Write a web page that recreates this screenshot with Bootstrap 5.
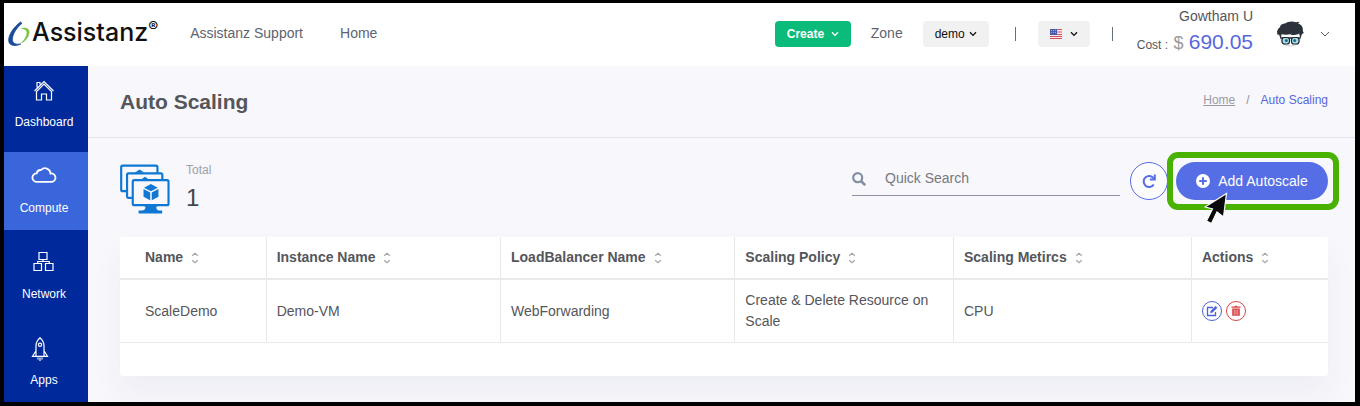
<!DOCTYPE html>
<html lang="en">
<head>
<meta charset="utf-8">
<meta name="viewport" content="width=device-width, initial-scale=1">
<title>Auto Scaling - Assistanz</title>
<link href="https://cdn.jsdelivr.net/npm/bootstrap@5.3.0/dist/css/bootstrap.min.css" rel="stylesheet">
<style>
  :root { --ink: #54565b; --accent: #556ee6; --line: #e9e9ec; --page: #f7f7fc; }
  body { font-family: "Liberation Sans", Arial, sans-serif; font-size: 14px; line-height: 21px; color: var(--ink); background: var(--page); }
  svg { display: block; }
  .app-frame { min-height: 100vh; border: solid #000; border-width: 3px 5px 4px 4px; }
  .topbar { height: 63px; background: #fff; padding-bottom: 2px; }
  .topbar .plain-link { color: #5d6470; text-decoration: none; }
  .main-links { gap: 37px; padding-left: 32px; }
  .brand { color: #111; text-decoration: none; font-family: Inter, "Open Sans", sans-serif; font-size: 25px; line-height: 32px; font-weight: 500; padding-bottom: 3px; }
  .brand svg { margin-top: 3px; }
  .brand sup { font-size: 15px; line-height: 1; top: -9px; font-weight: 600; }
  .top-btn { height: 26px; border: 0; border-radius: 4px; font-size: 12px; line-height: 18px; padding: 0 12px; background: #f1f1f1; color: #111; }
  .create-btn { background: #0abb7a; color: #fff; font-weight: 700; width: 76px; }
  .bar-mark { width: 1px; height: 14px; background: #66707a; margin-left: 22px; }
  .bar-mark.first-mark { margin: 0 22px 0 26px; }
  .user-name { line-height: 24px; }
  .cost-line { font-size: 12px; line-height: 28px; }
  .cost-sign { font-size: 18px; color: #999; margin: 0 2px; }
  .cost-sum { font-size: 21px; color: #5867dd; }
  .account-btn { color: #555a62; margin-right: 25px; }
  .side-nav { width: 84px; background: #002a9c; }
  .side-nav a { height: 78px; color: #fff; text-decoration: none; font-size: 12px; line-height: 18px; padding: 13px 4px 0 0; }
  .side-nav a.active { background: #3a66db; }
  .page-head { border-bottom: 1px solid #e3e3ec; height: 72px; padding: 0 27px 0 32px; }
  .page-head h1 { font-size: 21px; line-height: 28px; font-weight: 700; margin: 0; }
  .crumbs { font-size: 12px; line-height: 18px; gap: 3px; --bs-breadcrumb-divider-color: #8f9199; }
  .crumbs .home-link { color: #9a9aa2; }
  .crumbs .here { color: #5867dd; text-decoration: none; padding-left: 3px; }
  .work-area { padding: 24px 27px 26px 32px; }
  .summary { height: 51px; }
  .summary-icon { margin-top: 2px; }
  .total-label { font-size: 12px; line-height: 16px; color: #a0a0a8; }
  .total-num { font-size: 24px; line-height: 40px; color: #44464b; }
  .search-box { width: 268px; height: 34px; border-bottom: 1px solid #8d92a5; color: #8390a3; }
  .search-box input { border: 0; background: none; outline: 0; color: var(--ink); padding: 0; min-width: 0; margin-left: 19px; }
  .search-box input::placeholder { color: #77797f; opacity: 1; }
  .reload-btn { width: 38px; height: 38px; border: 1px solid var(--accent); color: var(--accent); background: #fcfcff; margin: 0 8px 0 10px; }
  .add-btn { height: 38px; width: 152px; border: 0; color: #fff; background: var(--accent); }
  .focus-frame { position: absolute; inset: -10px -11px -10px -9px; border: 6px solid #49b100; border-radius: 11px; pointer-events: none; }
  .pointer { position: absolute; left: 28px; top: 30px; pointer-events: none; }
  .list-card { background: #fff; border-radius: 3px; padding-bottom: 33px; box-shadow: 0 18px 32px rgba(60, 50, 100, .05); }
  .scale-table { table-layout: fixed; color: var(--ink); margin: 0; width: 100%; }
  .scale-table th, .scale-table td { padding: 10px; border-right: 1px solid var(--line); }
  .scale-table th:first-child, .scale-table td:first-child { padding-left: 25px; }
  .scale-table th:last-child, .scale-table td:last-child { border-right: 0; }
  .scale-table th { border-bottom: 2px solid var(--line); }
  .scale-table td { border-bottom: 1px solid var(--line); }
  .c1 { width: 12.1%; } .c2 { width: 19.4%; } .c3 { width: 19.4%; } .c4 { width: 18.1%; } .c5 { width: 19.7%; }
  .round-btn { width: 20px; height: 20px; background: #fff; border: 1px solid; }
  .edit-btn { color: #4a62d8; } .bin-btn { color: #d84545; }
</style>
</head>
<body>
<svg width="0" height="0" class="position-absolute" aria-hidden="true">
  <symbol id="chev" viewBox="0 0 8 6"><path d="M1 1.2 4 4.4 7 1.2" fill="none" stroke="currentColor" stroke-width="1.3"/></symbol>
  <symbol id="chev-thin" viewBox="0 0 10 8"><path d="M1 2 5 6 9 2" fill="none" stroke="currentColor"/></symbol>
  <symbol id="sort" viewBox="0 0 8 12"><path d="M1.2 3.7 4 1.2 6.8 3.7M1.2 8.3 4 10.8 6.8 8.3" fill="none" stroke="#a5a5a8" stroke-width="1.2"/></symbol>
</svg>
<div class="app-frame d-flex flex-column">
  <header class="topbar d-flex align-items-center">
    <a href="#" class="brand d-flex align-items-center ps-1">
      <svg width="24" height="28" viewBox="0 0 24 28" fill="none" aria-hidden="true">
        <path d="M12.500 2C6 7 -.2 15 .8 21.500c.7 4.500 7 5 12 2.500-5 .8-8.400-.5-8.400-4.500C4.400 13.500 9.500 7 14 3.300Z" fill="#1a4a9c" stroke="#1a4a9c" stroke-width=".8"/>
        <path d="M13.500 8.500c4.500-1.300 8.100.2 7.600 4.200-.4 3.800-3.100 7.800-7.600 10.300 3.300-3.500 5.500-7.200 5.500-10.200 0-2.800-2-4-5.500-4.300Z" fill="#7cc243" stroke="#7cc243" stroke-width=".6"/>
      </svg>
      <span>Assistanz<sup>®</sup></span>
    </a>
    <nav class="main-links d-flex">
      <a href="#" class="plain-link">Assistanz Support</a>
      <a href="#" class="plain-link">Home</a>
    </nav>
    <div class="d-flex align-items-center ms-auto">
      <button type="button" class="top-btn create-btn d-flex align-items-center justify-content-between">Create <svg width="8" height="6"><use href="#chev"/></svg></button>
      <span class="plain-link mx-3 px-1">Zone</span>
      <button type="button" class="top-btn d-flex align-items-center gap-1">demo <svg width="8" height="6"><use href="#chev"/></svg></button>
      <span class="bar-mark first-mark"></span>
      <button type="button" class="top-btn d-flex align-items-center gap-2" aria-label="Language">
        <svg width="12" height="10" viewBox="0 0 12 10"><path fill="#f4e9ec" d="M0 0h12v10H0z"/><path stroke="#d5505a" d="M0 .5h12M0 3h12M0 5.500h12M0 7.500h12M0 9.500h12"/><path fill="#4c5cab" d="M0 0h7v6H0z"/><path stroke="#9aa5d6" stroke-dasharray="1 1" d="M1 1.500h5M1 3.500h5"/></svg>
        <svg width="8" height="6"><use href="#chev"/></svg>
      </button>
      <span class="bar-mark"></span>
      <div class="text-end ms-4 pb-1">
        <div class="user-name">Gowtham U</div>
        <div class="cost-line">Cost : <span class="cost-sign">$</span> <span class="cost-sum">690.05</span></div>
      </div>
      <svg class="ms-4" width="27" height="26" viewBox="0 0 27 26" aria-hidden="true">
        <path d="M4 13v5.500c1 4.500 5 6.500 9.500 6.500s8.500-2 9.500-6.500V13Z" fill="#fff" stroke="#99a" stroke-width=".5"/>
        <path d="M0 10.500C.8 8 1.800 6.800 3 6.200 3.200 4 5.500 2.600 8 2.600 10.500.6 15 0 19 1.200l4-.4-2 1.700c3.800 1.300 5.400 4 4.800 7.500l1 2-1.800 1-1.500 4.500-1.300-5c-3 1.500-6 1.800-9 1.500l2-1.500c-3 1.300-7 1.500-10.700.5L3.700 18 2 13.500l-1.500.5Z" fill="#2b323c"/>
        <path d="M3.500 17h20" stroke="#20262f" stroke-width="1.500"/>
        <rect x="5" y="16.500" width="7.500" height="6.500" rx="2.500" fill="#a9dceb" stroke="#20262f" stroke-width="1.200"/><rect x="14.500" y="16.500" width="7.500" height="6.500" rx="2.500" fill="#a9dceb" stroke="#20262f" stroke-width="1.200"/>
        <circle cx="9.300" cy="19.500" r="1.500" fill="#176d88"/><circle cx="17.700" cy="19.500" r="1.500" fill="#176d88"/>
      </svg>
      <button type="button" class="btn account-btn border-0 p-0 ms-3" aria-label="Account menu"><svg width="10" height="8"><use href="#chev-thin"/></svg></button>
    </div>
  </header>

  <div class="d-flex flex-grow-1">
    <nav class="side-nav d-flex flex-column gap-2 flex-shrink-0">
      <a href="#" class="d-flex flex-column align-items-center gap-2">
        <svg width="22" height="26" viewBox="0 0 22 26" fill="none" stroke="#fff" stroke-width="1.200"><path d="M1.500 12 11 2.500 20.500 12M3.500 12.500V21h5v-6h5v6h5v-8.500L11 5Z M4 8.500V3.500h3v2"/></svg>Dashboard</a>
      <a href="#" class="active d-flex flex-column align-items-center gap-2">
        <svg width="26" height="26" viewBox="0 0 26 26" fill="none" stroke="#fff" stroke-width="1.800"><path d="M5.500 17.800a4.200 4.200 0 0 1 .2-8.400A4 4 0 0 1 10 6 5.500 5.500 0 0 1 19.500 9.500a4.200 4.200 0 0 1 1.500 8.300Z" transform="translate(0 -1)"/></svg>Compute</a>
      <a href="#" class="d-flex flex-column align-items-center gap-2">
        <svg width="22" height="26" viewBox="0 0 22 26" fill="none" stroke="#fff" stroke-width="1.200"><path d="M5 2.500h8v7H5zM0 13.500h7.500v7H0zM11.500 13.500H19v7h-7.500zM9 9.500v2M3.700 13.500v-2h11.600v2" transform="translate(1 -1)"/></svg>Network</a>
      <a href="#" class="d-flex flex-column align-items-center gap-2">
        <svg class="me-2" width="18" height="26" viewBox="0 0 18 26" fill="none" stroke="#fff" stroke-width="1.200"><path d="M9 .8C6 3.300 5 6.300 5 9.300v10h8v-10c0-3-1-6-4-8.500ZM5 13.800l-3.500 5.500H5M13 13.800l3.500 5.500H13"/><circle cx="9" cy="7.800" r="1.600"/><path d="M7 20.500v2M9 20.500V24M11 20.500v2"/></svg>Apps</a>
    </nav>

    <main class="flex-grow-1">
      <div class="page-head d-flex align-items-center justify-content-between">
        <h1>Auto Scaling</h1>
        <nav aria-label="breadcrumb">
          <ol class="breadcrumb crumbs mb-1">
            <li class="breadcrumb-item"><a href="#" class="home-link">Home</a></li>
            <li class="breadcrumb-item active ps-2"><a href="#" class="here">Auto Scaling</a></li>
          </ol>
        </nav>
      </div>

      <div class="work-area">
        <div class="summary d-flex align-items-start mb-4">
          <svg class="summary-icon flex-shrink-0" width="50" height="50" viewBox="0 0 51 50" fill="#f7f7fc" stroke="#0f78d4" stroke-width="2.200" aria-hidden="true">
            <rect x="1.200" y="1.200" width="37" height="26" rx="1.500"/><path d="m20 5 5 3.500H15Z" fill="#0f78d4" stroke="none"/>
            <rect x="7.200" y="9" width="36" height="25" rx="1.500"/><path d="m25.500 12.500 5 3.500h-10Z" fill="#0f78d4" stroke="none"/>
            <rect x="13" y="16" width="36.500" height="25.500" rx="1.500"/>
            <path d="M23 42h17l-3 1c0 2 1 4 3 4h3v3H19v-3h3c3 0 4-2 4-4Z" fill="#0f78d4" stroke="none"/>
            <path d="m31.500 20 7 3.700-7 3.700-7-3.700ZM24 25l6.800 3.500v8L24 33ZM39.200 25l-6.800 3.500v8l6.800-3.500Z" fill="#0f78d4" stroke="none"/>
          </svg>
          <div class="ms-3">
            <div class="total-label">Total</div>
            <div class="total-num">1</div>
          </div>
          <div class="d-flex ms-auto">
            <label class="search-box d-flex align-items-center">
              <svg width="14" height="14" viewBox="0 0 14 14" fill="none" stroke="currentColor" stroke-width="2.200" aria-hidden="true"><circle cx="5.700" cy="5.700" r="4.500"/><path d="m9 9 4.200 4.200" stroke-width="2.600"/></svg>
              <input type="text" class="flex-grow-1" placeholder="Quick Search" aria-label="Quick Search">
            </label>
            <button type="button" class="reload-btn rounded-circle d-flex align-items-center justify-content-center p-0" aria-label="Refresh">
              <svg width="16" height="16" viewBox="0 0 16 16" fill="none" stroke="currentColor" stroke-width="2"><path d="M12.800 5.500A5.500 5.500 0 1 0 12.800 11.500"/><path d="M13.800 1.500v5H8.800" /></svg>
            </button>
            <div class="position-relative">
              <button type="button" class="add-btn rounded-pill d-flex align-items-center justify-content-center gap-2">
                <svg width="14" height="14" viewBox="0 0 14 14"><circle cx="7" cy="7" r="7" fill="#fff"/><path d="M7 3.200v7.600M3.200 7h7.600" stroke="#556ee6" stroke-width="2"/></svg>
                Add Autoscale
              </button>
              <span class="focus-frame"></span>
              <svg class="pointer" width="24" height="34" viewBox="0 0 24 34" aria-hidden="true"><path d="M22.500 1.500 1 15l7.500 2L2.500 29l5 2.500L13 20l6.500 5Z" fill="#0a0a0a" stroke="#fff" stroke-width="1.200"/></svg>
            </div>
          </div>
        </div>

        <div class="list-card">
          <table class="table-borderless align-middle scale-table">
            <colgroup><col class="c1"><col class="c2"><col class="c3"><col class="c4"><col class="c5"><col></colgroup>
            <thead>
              <tr>
                <th scope="col"><span class="d-flex align-items-center gap-2">Name <svg width="8" height="12"><use href="#sort"/></svg></span></th>
                <th scope="col"><span class="d-flex align-items-center gap-2">Instance Name <svg width="8" height="12"><use href="#sort"/></svg></span></th>
                <th scope="col"><span class="d-flex align-items-center gap-2">LoadBalancer Name <svg width="8" height="12"><use href="#sort"/></svg></span></th>
                <th scope="col"><span class="d-flex align-items-center gap-2">Scaling Policy <svg width="8" height="12"><use href="#sort"/></svg></span></th>
                <th scope="col"><span class="d-flex align-items-center gap-2">Scaling Metircs <svg width="8" height="12"><use href="#sort"/></svg></span></th>
                <th scope="col"><span class="d-flex align-items-center gap-2">Actions <svg width="8" height="12"><use href="#sort"/></svg></span></th>
              </tr>
            </thead>
            <tbody>
              <tr>
                <td>ScaleDemo</td>
                <td>Demo-VM</td>
                <td>WebForwarding</td>
                <td>Create &amp; Delete Resource on Scale</td>
                <td>CPU</td>
                <td>
                  <div class="d-flex gap-1">
                    <button type="button" class="round-btn edit-btn rounded-circle d-flex align-items-center justify-content-center p-0" aria-label="Edit"><svg width="12" height="12" viewBox="0 0 12 12" fill="none" stroke="currentColor"><path d="M7 2.500H1.500v8h8V7" stroke-width="1.300"/><path d="M4.500 7.800 5 5.800 9.500 1.200l1.500 1.500-4.500 4.600Z" fill="currentColor" stroke-width=".6"/></svg></button>
                    <button type="button" class="round-btn bin-btn rounded-circle d-flex align-items-center justify-content-center p-0" aria-label="Delete"><svg width="10" height="12" viewBox="0 0 10 12"><path d="M.5 1.500h3L4 .7h2l.5.8h3v1.200h-9ZM1.200 3.500h7.600v7.300H1.200Z" fill="currentColor"/><path d="M3.300 4.700v5M5 4.700v5M6.700 4.700v5" stroke="#fff" stroke-width=".5"/></svg></button>
                  </div>
                </td>
              </tr>
            </tbody>
          </table>
        </div>
      </div>
    </main>
  </div>
</div>
<script src="https://cdn.jsdelivr.net/npm/bootstrap@5.3.0/dist/js/bootstrap.bundle.min.js"></script>
</body>
</html>
